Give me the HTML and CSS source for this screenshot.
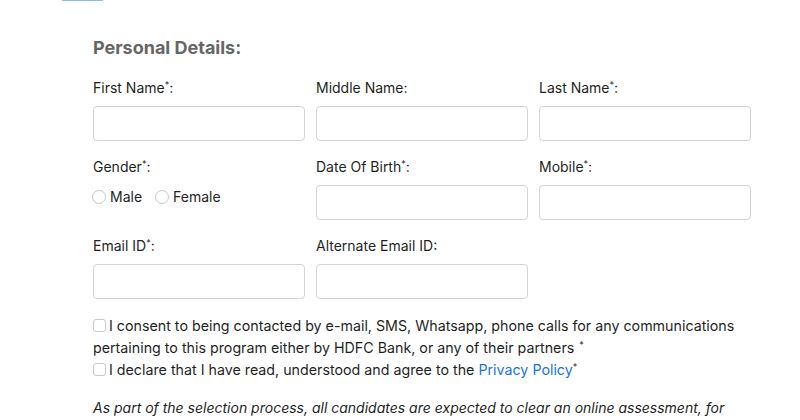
FILE: index.html
```html
<!DOCTYPE html>
<html>
<head>
<meta charset="utf-8">
<link rel="stylesheet" href="styles.css">
</head>
<body>
<div class="topbar"></div>
<main class="form">
  <h2 class="heading">Personal Details:</h2>
  <div class="grid">
    <div class="field">
      <label class="label">First Name<sup>*</sup>:</label>
      <input class="input" type="text">
    </div>
    <div class="field">
      <label class="label">Middle Name:</label>
      <input class="input" type="text">
    </div>
    <div class="field">
      <label class="label">Last Name<sup>*</sup>:</label>
      <input class="input" type="text">
    </div>
    <div class="field">
      <label class="label">Gender<sup>*</sup>:</label>
      <div class="radios">
        <label class="radio"><input type="radio" name="g" class="radio-input">Male</label>
        <label class="radio"><input type="radio" name="g" class="radio-input">Female</label>
      </div>
    </div>
    <div class="field">
      <label class="label">Date Of Birth<sup>*</sup>:</label>
      <input class="input" type="text">
    </div>
    <div class="field">
      <label class="label">Mobile<sup>*</sup>:</label>
      <input class="input" type="text">
    </div>
    <div class="field">
      <label class="label">Email ID<sup>*</sup>:</label>
      <input class="input" type="text">
    </div>
    <div class="field">
      <label class="label">Alternate Email ID:</label>
      <input class="input" type="text">
    </div>
  </div>
  <div class="consents">
    <p class="consent"><input type="checkbox" class="check"><span>I consent to being contacted by e-mail, SMS, Whatsapp, phone calls for any communications</span> <span>pertaining to this program either by HDFC Bank, or any of their partners</span><sup class="req">*</sup></p>
    <p class="consent"><input type="checkbox" class="check">I declare that I have read, understood and agree to the <a class="link" href="#">Privacy Policy</a><sup>*</sup></p>
  </div>
  <p class="note">As part of the selection process, all candidates are expected to clear an online assessment, for</p>
</main>
</body>
</html>
```
FILE: styles.css
```css
html, body {
  margin: 0;
  padding: 0;
  background: #fff;
  overflow: hidden;
}
body {
  font-family: Inter, "Liberation Sans", sans-serif;
  color: #1f1f1f;
  font-size: 14px;
}
.topbar {
  margin-left: 62px;
  width: 41px;
  height: 1px;
  background: #93b7f5;
}
.form {
  padding-left: 93px;
  width: 658px;
}
.heading {
  margin: 35px 0 0;
  font-size: 18px;
  line-height: 24px;
  font-weight: 700;
  color: #666;
}
.grid {
  margin-top: 18px;
  display: grid;
  grid-template-columns: repeat(3, 212px);
  column-gap: 11px;
  row-gap: 16px;
}
.field {
  display: flex;
  flex-direction: column;
}
.label {
  line-height: 20px;
  margin-bottom: 8px;
}
sup {
  font-size: 9px;
  line-height: 0;
  vertical-align: 5px;
}
.req {
  margin-left: 5px;
}
.input {
  box-sizing: border-box;
  height: 35px;
  width: 212px;
  border: 1px solid #d4d4d8;
  border-radius: 4px;
  margin: 0;
  background: #fff;
}
.radios {
  display: flex;
  gap: 14px;
  margin-top: 2px;
  line-height: 20px;
}
.radio {
  display: flex;
  align-items: center;
}
.radio-input {
  appearance: none;
  width: 14px;
  height: 14px;
  border: 1px solid #c8c8c8;
  border-radius: 50%;
  margin: 0 4px 0 -1px;
  background: #fff;
}
.consents {
  margin-top: 16px;
}
.consent {
  margin: 0;
  line-height: 22px;
  font-size: 14.25px;
}
.check {
  appearance: none;
  width: 13px;
  height: 13px;
  border: 1px solid #c8c8c8;
  border-radius: 3px;
  margin: 0 3px 0 0;
  vertical-align: -1px;
  background: #fff;
}
.link {
  color: #1a73e8;
  text-decoration: none;
}
.note {
  margin: 16px 0 0;
  line-height: 22px;
  font-style: italic;
  font-size: 14px;
}
```
